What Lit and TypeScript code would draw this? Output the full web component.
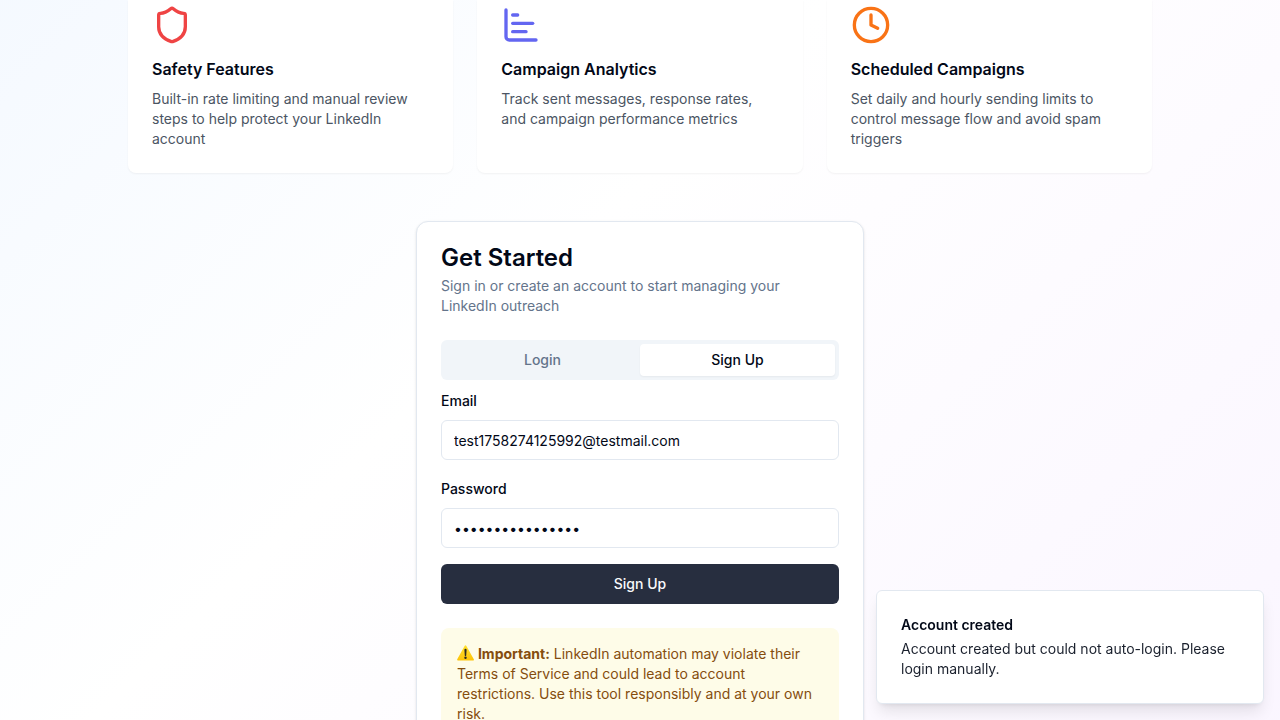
import { LitElement, html, css, svg } from "lit";
import { customElement, property, state } from "lit/decorators.js";

const icons = {
  shield: svg`<path d="M20 13c0 5-3.5 7.5-7.66 8.95a1 1 0 0 1-.67-.01C7.5 20.5 4 18 4 13V6a1 1 0 0 1 1-1c2 0 4.5-1.2 6.24-2.72a1.17 1.17 0 0 1 1.52 0C14.51 3.81 17 5 19 5a1 1 0 0 1 1 1z"/>`,
  chart: svg`<path d="M3 3v16a2 2 0 0 0 2 2h16"/><path d="M7 11h12"/><path d="M7 16h8"/><path d="M7 6h3"/>`,
  clock: svg`<circle cx="12" cy="12" r="10"/><polyline points="12 6 12 12 16 14"/>`,
};

type IconName = keyof typeof icons;

@customElement("feature-card")
class FeatureCard extends LitElement {
  @property() icon: IconName = "shield";
  @property() heading = "";
  @property() text = "";

  static styles = css`
    :host {
      display: block;
      box-sizing: border-box;
      padding: 5px 24px 24px;
      background: #fff;
      border-radius: 0 0 8px 8px;
      box-shadow: 0 1px 2px rgba(0, 0, 0, 0.05);
    }
    .icon {
      display: block;
      width: 40px;
      height: 40px;
      margin-bottom: 12px;
      fill: none;
      stroke: currentColor;
      stroke-width: 2;
      stroke-linecap: round;
      stroke-linejoin: round;
    }
    .shield { color: #ef4444; }
    .chart { color: #6366f1; }
    .clock { color: #f97316; }
    .heading {
      margin: 0 0 8px;
      font-size: 16px;
      line-height: 24px;
      font-weight: 600;
    }
    .text {
      margin: 0;
      color: #4b5563;
      font-size: 14px;
      line-height: 20px;
    }
  `;

  render() {
    return html`
      <svg class="icon ${this.icon}" viewBox="0 0 24 24" aria-hidden="true">${icons[this.icon]}</svg>
      <h3 class="heading">${this.heading}</h3>
      <p class="text">${this.text}</p>
    `;
  }
}

@customElement("app-root")
class AppRoot extends LitElement {
  @state() private tab: "login" | "signup" = "signup";

  static styles = css`
    :host {
      display: block;
      color: #020817;
      font-family: Inter, "Liberation Sans", sans-serif;
      font-size: 16px;
      line-height: 24px;
      -webkit-font-smoothing: antialiased;
    }
    * { box-sizing: border-box; }
    .page {
      height: 100vh;
      overflow: hidden;
      background: linear-gradient(to bottom right, #eff6ff, #ffffff, #faf5ff) 0 -440px / 100% 1250px;
    }
    .container {
      display: flex;
      flex-direction: column;
      gap: 48px;
      max-width: 1024px;
      margin: 0 auto;
    }
    .features {
      display: grid;
      grid-template-columns: repeat(3, 1fr);
      gap: 24px;
    }
    .card {
      width: 100%;
      max-width: 448px;
      margin: 0 auto;
      padding: 24px;
      background: #fff;
      border: 1px solid #e2e8f0;
      border-radius: 12px;
      box-shadow: 0 1px 3px rgba(0, 0, 0, 0.1), 0 1px 2px -1px rgba(0, 0, 0, 0.1);
    }
    .title {
      margin: 0 0 6px;
      font-size: 24px;
      line-height: 24px;
      font-weight: 600;
    }
    .subtitle {
      margin: 0 0 24px;
      color: #64748b;
      font-size: 14px;
      line-height: 20px;
    }
    .tabs {
      display: grid;
      grid-template-columns: 1fr 1fr;
      padding: 4px;
      margin-bottom: 8px;
      background: #f1f5f9;
      border-radius: 6px;
    }
    .tab {
      padding: 6px 12px;
      border: 0;
      border-radius: 4px;
      background: transparent;
      color: #64748b;
      font: 500 14px/20px Inter, "Liberation Sans", sans-serif;
    }
    .tab[aria-selected="true"] {
      background: #fff;
      color: #020817;
      box-shadow: 0 1px 2px rgba(0, 0, 0, 0.05);
    }
    .form {
      display: flex;
      flex-direction: column;
      gap: 16px;
    }
    .label {
      font-size: 14px;
      line-height: 14px;
      font-weight: 500;
    }
    .input {
      display: block;
      width: 100%;
      height: 40px;
      margin-top: 8px;
      padding: 8px 12px;
      border: 1px solid #e2e8f0;
      border-radius: 6px;
      background: #fff;
      color: #020817;
      font: 400 14px/20px Inter, "Liberation Sans", sans-serif;
      outline: none;
    }
    .submit {
      height: 40px;
      border: 0;
      border-radius: 6px;
      background: #272e3f;
      color: #f8fafc;
      font: 500 14px/20px Inter, "Liberation Sans", sans-serif;
    }
    .notice {
      margin: 24px 0 0;
      padding: 16px;
      border-radius: 8px;
      background: #fefce8;
      color: #854d0e;
      font-size: 14px;
      line-height: 20px;
    }
    .warning {
      width: 17px;
      height: 16px;
      vertical-align: -2px;
    }
    .toast {
      position: fixed;
      right: 16px;
      bottom: 16px;
      width: 388px;
      padding: 24px;
      background: #fff;
      border: 1px solid #e2e8f0;
      border-radius: 6px;
      box-shadow: 0 10px 15px -3px rgba(0, 0, 0, 0.1), 0 4px 6px -4px rgba(0, 0, 0, 0.1);
      font-size: 14px;
      line-height: 20px;
    }
    .toast-title {
      margin-bottom: 4px;
      font-weight: 600;
    }
    .toast-text { opacity: 0.9; }
  `;

  render() {
    const signup = this.tab === "signup";
    return html`
      <main class="page">
        <div class="container">
          <section class="features">
            <feature-card
              icon="shield"
              heading="Safety Features"
              text="Built-in rate limiting and manual review steps to help protect your LinkedIn account"
            ></feature-card>
            <feature-card
              icon="chart"
              heading="Campaign Analytics"
              text="Track sent messages, response rates, and campaign performance metrics"
            ></feature-card>
            <feature-card
              icon="clock"
              heading="Scheduled Campaigns"
              text="Set daily and hourly sending limits to control message flow and avoid spam triggers"
            ></feature-card>
          </section>

          <section class="card">
            <h2 class="title">Get Started</h2>
            <p class="subtitle">Sign in or create an account to start managing your LinkedIn outreach</p>
            <div class="tabs" role="tablist">
              <button class="tab" role="tab" aria-selected=${signup ? "false" : "true"} @click=${() => (this.tab = "login")}>Login</button>
              <button class="tab" role="tab" aria-selected=${signup ? "true" : "false"} @click=${() => (this.tab = "signup")}>Sign Up</button>
            </div>
            <form class="form" @submit=${(e: Event) => e.preventDefault()}>
              <div class="field">
                <label class="label" for="email">Email</label>
                <input class="input" id="email" type="email" value="test1758274125992@testmail.com" />
              </div>
              <div class="field">
                <label class="label" for="password">Password</label>
                <input class="input" id="password" type="password" value="TestPassword123!" />
              </div>
              <button class="submit" type="submit">${signup ? "Sign Up" : "Login"}</button>
            </form>
            <p class="notice">
              <svg class="warning" viewBox="0 0 17 16" role="img" aria-label="Warning">
                <defs>
                  <linearGradient id="amber" x1="0" y1="0" x2="0" y2="1">
                    <stop offset="0" stop-color="#ffdf2e" />
                    <stop offset="1" stop-color="#fdc50b" />
                  </linearGradient>
                </defs>
                <path d="M8.5 1.2 16 14.6H1Z" fill="url(#amber)" stroke="url(#amber)" stroke-width="1.8" stroke-linejoin="round" />
                <path d="M7.4 4.8a1.1 1.1 0 0 1 2.2 0L9.2 10.4a.7.7 0 0 1-1.4 0Z" fill="#2b2a22" />
                <circle cx="8.5" cy="12.7" r="1.2" fill="#2b2a22" />
              </svg>
              <strong>Important:</strong> LinkedIn automation may violate their Terms of Service and could lead to
              account restrictions. Use this tool responsibly and at your own risk.
            </p>
          </section>
        </div>
      </main>

      <aside class="toast" role="status">
        <div class="toast-title">Account created</div>
        <div class="toast-text">Account created but could not auto-login. Please login manually.</div>
      </aside>
    `;
  }
}
